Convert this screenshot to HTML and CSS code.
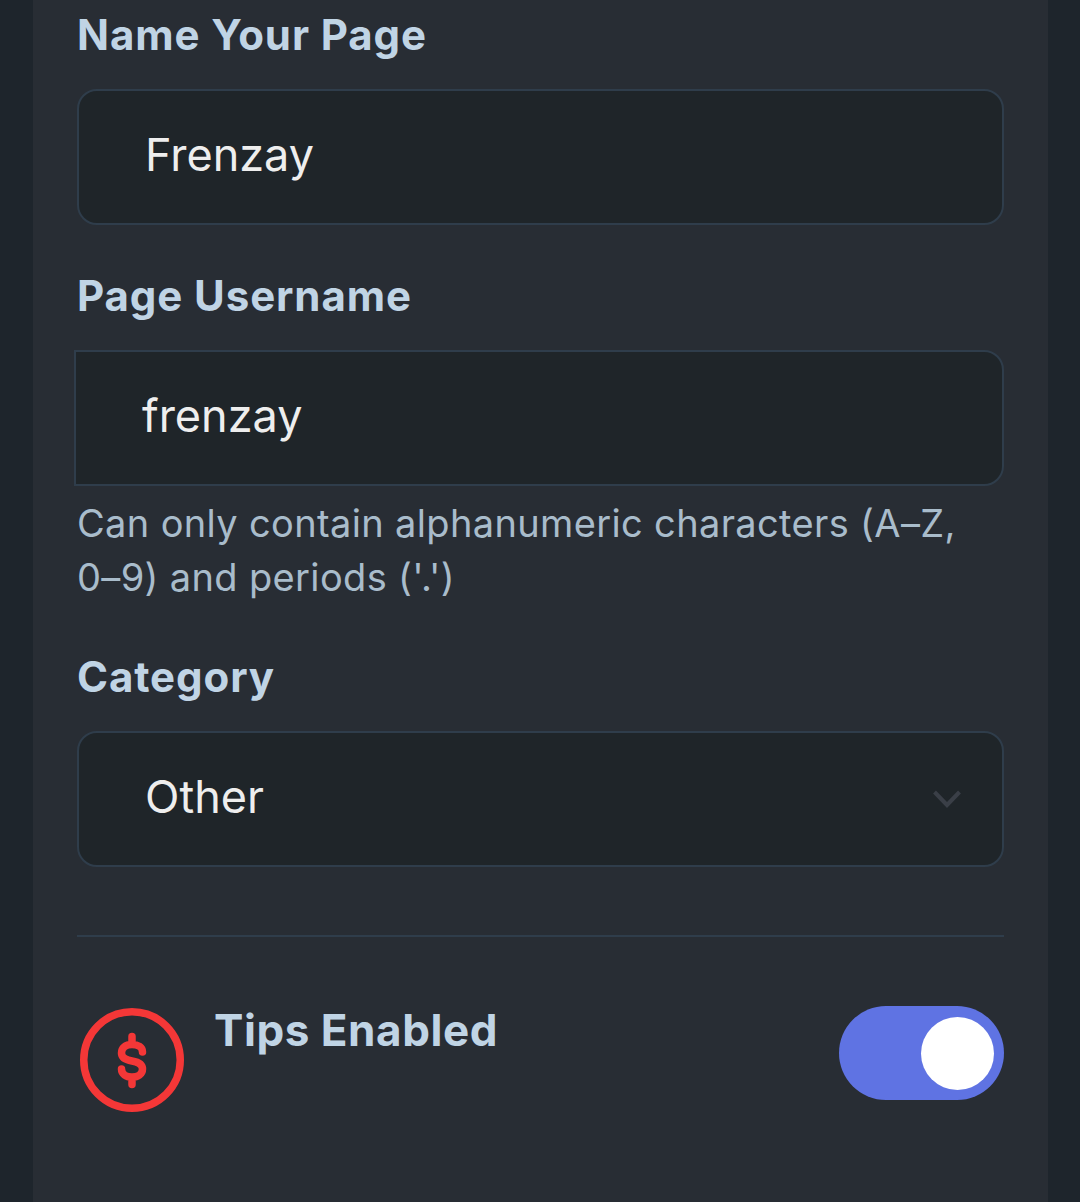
FILE: index.html
```html
<!DOCTYPE html>
<html lang="en">
<head>
<meta charset="utf-8">
<title>Page settings</title>
<link rel="stylesheet" href="styles.css">
</head>
<body>
<main class="panel">
  <div class="label">Name Your Page</div>
  <div class="field">Frenzay</div>
  <div class="label label-next">Page Username</div>
  <div class="field field-user">frenzay</div>
  <p class="help">Can only contain alphanumeric characters (A–Z,<br>0–9) and periods ('.')</p>
  <div class="label label-cat">Category</div>
  <div class="field field-select">
    <span>Other</span>
    <svg class="chevron" viewBox="0 0 30 20" aria-hidden="true"><path d="M2.5 3 15 16 27.5 3"/></svg>
  </div>
  <hr class="rule">
  <div class="tips">
    <svg class="tips-icon" viewBox="0 0 104 104" aria-hidden="true">
      <circle cx="52" cy="52" r="48.25"/>
      <path d="M62.5 44C62.5 39 58 36.5 52 36.5C45.5 36.5 41.5 40 41.5 45C41.5 50 46 52 52 53C58 54 62.5 56 62.5 61C62.5 66 58 69 52 69C46 69 41.5 66 41.5 61M52 28.5V36.5M52 69V76.5"/>
    </svg>
    <div class="tips-label">Tips Enabled</div>
    <div class="toggle"><span class="knob"></span></div>
  </div>
</main>
</body>
</html>
```
FILE: styles.css
```css
html, body {
  margin: 0;
  height: 1202px;
  overflow: hidden;
  background: #1e252c;
}
body {
  font-family: "Inter", "Liberation Sans", sans-serif;
  padding: 0 32px 0 33px;
  box-sizing: border-box;
}
.panel {
  height: 1202px;
  box-sizing: border-box;
  background: #282d34;
  padding: 7px 44px 0;
}
.label {
  color: #c0d4e5;
  font-size: 42px;
  font-weight: 700;
  letter-spacing: 0.9px;
  line-height: 56px;
  margin-bottom: 26px;
}
.label-next { margin-top: 43px; }
.label-cat { margin-top: 45px; }
.field {
  height: 136px;
  box-sizing: border-box;
  border: 2px solid #2f3d4b;
  border-radius: 20px;
  background: #1f2529;
  color: #eeeeee;
  font-size: 45px;
  line-height: 128px;
  padding-left: 66px;
}
.field-user {
  margin-left: -3px;
  border-radius: 0 20px 20px 0;
}
.field-select {
  display: flex;
  align-items: center;
  justify-content: space-between;
  padding-right: 40px;
}
.field-select span {
  margin-top: -4px;
}
.chevron {
  width: 30px;
  height: 20px;
}
.chevron path {
  fill: none;
  stroke: #3a3f47;
  stroke-width: 4;
}
.help {
  margin: 10px 0 0;
  color: #a9bccb;
  font-size: 38px;
  letter-spacing: 0.35px;
  line-height: 54px;
}
.rule {
  margin: 68px 0 0;
  border: 0;
  height: 2px;
  background: #2f3d4b;
}
.tips {
  margin-top: 69px;
  display: flex;
  align-items: flex-start;
}
.tips-icon {
  width: 104px;
  height: 104px;
  margin: 2px 0 0 3px;
  flex: none;
}
.tips-icon circle, .tips-icon path {
  fill: none;
  stroke: #f43737;
  stroke-width: 7.5;
  stroke-linecap: round;
}
.tips-label {
  margin: -4px 0 0 30px;
  color: #c0d4e5;
  font-size: 44px;
  font-weight: 700;
  letter-spacing: 0.55px;
  line-height: 56px;
  flex: 1;
}
.toggle {
  width: 165px;
  height: 94px;
  border-radius: 47px;
  background: #5f73e3;
  display: flex;
  align-items: center;
  justify-content: flex-end;
  padding-right: 10px;
  box-sizing: border-box;
}
.knob {
  width: 73px;
  height: 73px;
  border-radius: 50%;
  background: #ffffff;
}
```
